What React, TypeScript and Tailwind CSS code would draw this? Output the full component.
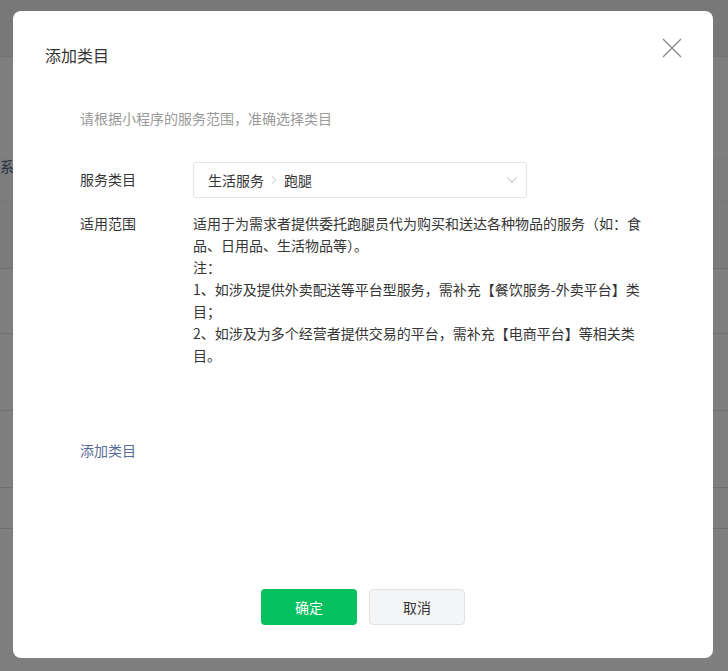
import { ChevronDown, ChevronRight } from 'lucide-react';

const scopeLines = [
  '适用于为需求者提供委托跑腿员代为购买和送达各种物品的服务（如：食品、日用品、生活物品等）。',
  '注：',
  '1、如涉及提供外卖配送等平台型服务，需补充【餐饮服务-外卖平台】类目；',
  '2、如涉及为多个经营者提供交易的平台，需补充【电商平台】等相关类目。',
];

function BackgroundPage() {
  return (
    <div className="min-h-[671px] bg-white text-sm text-[#353535]">
      <div className="h-[57px] border-b border-[#e7e7e7] bg-[#f0f0f0]" />
      <div className="h-[100px] bg-white" />
      <div className="h-[43px] bg-[#fafafa] pt-[1px] leading-4">
        <span className="text-[#4a5a80]">系</span>
      </div>
      <div className="h-[68px] border-t border-[#eeeeee] bg-[#f7f7f7]" />
      <div className="h-[65px] border-t border-[#e0e0e0]" />
      <div className="h-[77px] border-t border-[#e0e0e0]" />
      <div className="h-[77px] border-t border-[#e0e0e0]" />
      <div className="h-[41px] border-t border-[#e0e0e0]" />
      <div className="border-t border-[#e0e0e0]" />
    </div>
  );
}

function AddCategoryDialog() {
  return (
    <div className="absolute left-[13px] top-[11px] flex h-[647px] w-[700px] flex-col rounded-lg bg-white px-8 pb-[33px] pt-8">
      <div className="flex items-start justify-between">
        <h2 className="text-base leading-6 text-[#353535]">添加类目</h2>
        <button className="-mr-[1px] -mt-[5px] text-[#8a8a8a]" aria-label="关闭">
          <svg width="20" height="20" viewBox="0 0 20 20" fill="none" stroke="currentColor" strokeWidth="1.3">
            <path d="M1 1L19 19M19 1L1 19" />
          </svg>
        </button>
      </div>

      <div className="flex flex-1 flex-col pl-[35px] text-sm leading-[22px] text-[#353535]">
        <p className="mt-10 text-[#9a9a9a]">请根据小程序的服务范围，准确选择类目</p>

        <div className="mt-[33px] flex items-center">
          <div className="w-[113px] shrink-0 -mt-[3px]">服务类目</div>
          <div className="flex h-[36px] w-[334px] items-center justify-between rounded-[2px] border border-[#e4e4e4] pl-[14px] pr-[5px]">
            <span className="flex items-center">
              生活服务
              <ChevronRight className="mx-[3px] h-[14px] w-[14px] text-[#b2b2b2]" strokeWidth={1.3} />
              跑腿
            </span>
            <ChevronDown className="h-[18px] w-[18px] text-[#a8a8a8]" strokeWidth={1.2} />
          </div>
        </div>

        <div className="mt-[14px] flex">
          <div className="w-[113px] shrink-0">适用范围</div>
          <div className="w-[452px]">
            {scopeLines.map((line) => (
              <p key={line}>{line}</p>
            ))}
          </div>
        </div>

        <a href="#" className="mt-[73px] w-fit text-[#576b95]">
          添加类目
        </a>
      </div>

      <div className="flex justify-center gap-3">
        <button className="h-9 w-24 rounded bg-[#07c160] text-sm text-white">确定</button>
        <button className="h-9 w-24 rounded border border-[#e2e2e2] bg-[#f4f5f7] text-sm text-[#353535]">
          取消
        </button>
      </div>
    </div>
  );
}

export default function App() {
  return (
    <div
      className="relative h-[671px] w-full overflow-hidden"
      style={{ fontFamily: '"Noto Sans CJK SC", "Noto Sans", sans-serif' }}
    >
      <BackgroundPage />
      <div className="absolute inset-0 bg-black/50" />
      <AddCategoryDialog />
    </div>
  );
}
